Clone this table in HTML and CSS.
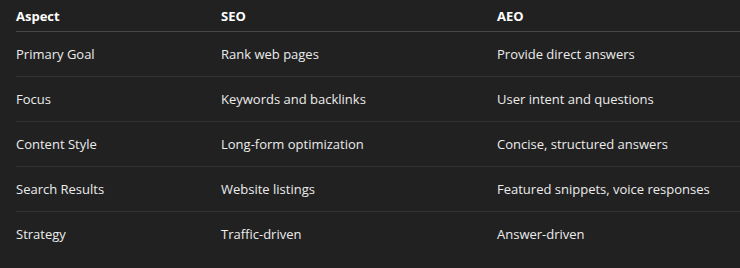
FILE: index.html
```html
<!DOCTYPE html>
<html>
<head>
<meta charset="utf-8">
<link rel="stylesheet" href="styles.css">
</head>
<body>
<div class="wrap">
<table class="cmp">
<thead>
<tr><th class="c1">Aspect</th><th class="c2">SEO</th><th>AEO</th></tr>
</thead>
<tbody>
<tr><td>Primary Goal</td><td>Rank web pages</td><td>Provide direct answers</td></tr>
<tr><td>Focus</td><td>Keywords and backlinks</td><td>User intent and questions</td></tr>
<tr><td>Content Style</td><td>Long-form optimization</td><td>Concise, structured answers</td></tr>
<tr><td>Search Results</td><td>Website listings</td><td>Featured snippets, voice responses</td></tr>
<tr class="last"><td>Strategy</td><td>Traffic-driven</td><td>Answer-driven</td></tr>
</tbody>
</table>
</div>
</body>
</html>
```
FILE: styles.css
```css
html, body {
  margin: 0;
  background: #212121;
}
.wrap {
  padding-left: 16px;
}
.cmp {
  width: 100%;
  border-collapse: collapse;
  font-family: "Open Sans", "Noto Sans", sans-serif;
  font-size: 13px;
  color: #ececec;
}
.cmp th, .cmp td {
  text-align: left;
  padding: 0;
  vertical-align: middle;
}
.cmp th {
  height: 31px;
  font-weight: 700;
  color: #fff;
  border-bottom: 1px solid #474747;
}
.cmp .c1 { width: 205px; }
.cmp .c2 { width: 276px; }
.cmp td {
  height: 44px;
  border-bottom: 1px solid #323232;
}
.cmp tr.last td {
  border-bottom: none;
}
```
